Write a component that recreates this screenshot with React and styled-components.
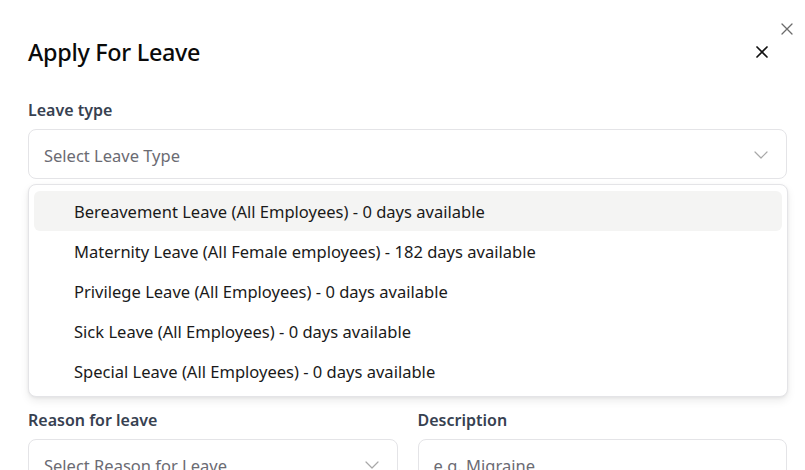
import React from 'react';
import styled, { createGlobalStyle } from 'styled-components';

const GlobalStyle = createGlobalStyle`
  html, body {
    margin: 0;
    padding: 0;
    background: #ffffff;
    font-family: 'Noto Sans', 'Open Sans', sans-serif;
    overflow: hidden;
  }
`;

const Modal = styled.div`
  position: relative;
  width: 805px;
  height: 470px;
  box-sizing: border-box;
  padding: 36px 18px 0 28px;
  background: #fff;
  overflow: hidden;
`;

const OuterClose = styled.button`
  position: absolute;
  top: 22px;
  right: 11px;
  width: 14px;
  height: 14px;
  padding: 0;
  border: 0;
  background: none;
  color: #6b6b6b;
  display: flex;
`;

const Header = styled.div`
  display: flex;
  align-items: center;
  justify-content: space-between;
  height: 32px;
`;

const Title = styled.h2`
  margin: 0;
  font-size: 23.4px;
  line-height: 32px;
  font-weight: 500;
  color: #0a0a0a;
  letter-spacing: -0.3px;
`;

const CloseButton = styled.button`
  width: 14px;
  height: 14px;
  margin-right: 18px;
  padding: 0;
  border: 0;
  background: none;
  color: #111;
  display: flex;
`;

const Form = styled.div`
  margin-top: 31px;
  display: flex;
  flex-direction: column;
  gap: 24px;
`;

const Row = styled.div`
  display: grid;
  grid-template-columns: ${(p) => (p.$cols === 2 ? '1fr 1fr' : '1fr')};
  column-gap: 20px;
  margin-top: ${(p) => (p.$pull ? '-2px' : '0')};
`;

const Field = styled.div`
  position: relative;
  display: flex;
  flex-direction: column;
  gap: 8px;
`;

const Label = styled.label`
  font-size: 16px;
  line-height: 22px;
  min-height: 22px;
  font-weight: 600;
  color: #374151;
`;

const Box = styled.div`
  height: 50px;
  box-sizing: border-box;
  border: 1px solid #e4e4e7;
  border-radius: 8px;
  display: flex;
  align-items: center;
  justify-content: space-between;
  padding: 2px 18px 0 15px;
  font-size: 16.5px;
  color: #6b6b73;
  background: #fff;
`;

const Menu = styled.div`
  position: absolute;
  top: calc(100% + 5px);
  left: 0;
  right: -1px;
  z-index: 2;
  padding: 6px 5px 5px 5px;
  background: #fff;
  border: 1px solid #e4e4e7;
  border-radius: 8px;
  box-shadow: 0 4px 8px rgba(0, 0, 0, 0.08), 0 1px 3px rgba(0, 0, 0, 0.06);
  box-sizing: border-box;
`;

const Option = styled.div`
  height: 40px;
  display: flex;
  align-items: center;
  padding: 1px 0 0 40px;
  box-sizing: border-box;
  border-radius: 6px;
  font-size: 16.55px;
  color: #1a1a1a;
  background: ${(p) => (p.$active ? '#f4f4f3' : 'transparent')};
`;

const XIcon = ({ size = 14, stroke = 1.6 }) => (
  <svg width={size} height={size} viewBox="0 0 14 14" fill="none">
    <path d="M2 2L12 12M12 2L2 12" stroke="currentColor" strokeWidth={stroke} strokeLinecap="round" />
  </svg>
);

const Chevron = () => (
  <svg width="14" height="8" viewBox="0 0 14 8" fill="none">
    <path d="M1 1L7 7L13 1" stroke="#a8a8a8" strokeWidth="1.2" strokeLinecap="round" strokeLinejoin="round" />
  </svg>
);

const leaveTypes = [
  'Bereavement Leave (All Employees) - 0 days available',
  'Maternity Leave (All Female employees) - 182 days available',
  'Privilege Leave (All Employees) - 0 days available',
  'Sick Leave (All Employees) - 0 days available',
  'Special Leave (All Employees) - 0 days available'
];

// rows that sit under the open menu
const CoveredRow = () => (
  <Row $cols={2}>
    <Field>
      <Label />
      <Box />
    </Field>
    <Field>
      <Label />
      <Box />
    </Field>
  </Row>
);

const App = () => (
  <>
    <GlobalStyle />
    <Modal>
      <OuterClose>
        <XIcon size={14} stroke={1.3} />
      </OuterClose>
      <Header>
        <Title>Apply For Leave</Title>
        <CloseButton>
          <XIcon size={14} stroke={1.7} />
        </CloseButton>
      </Header>
      <Form>
        <Row>
          <Field>
            <Label>Leave type</Label>
            <Box>
              <span>Select Leave Type</span>
              <Chevron />
            </Box>
            <Menu>
              {leaveTypes.map((t, i) => (
                <Option key={t} $active={i === 0}>
                  {t}
                </Option>
              ))}
            </Menu>
          </Field>
        </Row>
        <CoveredRow />
        <CoveredRow />
        <Row $cols={2} $pull>
          <Field>
            <Label>Reason for leave</Label>
            <Box>
              <span>Select Reason for Leave</span>
              <Chevron />
            </Box>
          </Field>
          <Field>
            <Label>Description</Label>
            <Box>
              <span>e.g. Migraine</span>
            </Box>
          </Field>
        </Row>
      </Form>
    </Modal>
  </>
);

export default App;
